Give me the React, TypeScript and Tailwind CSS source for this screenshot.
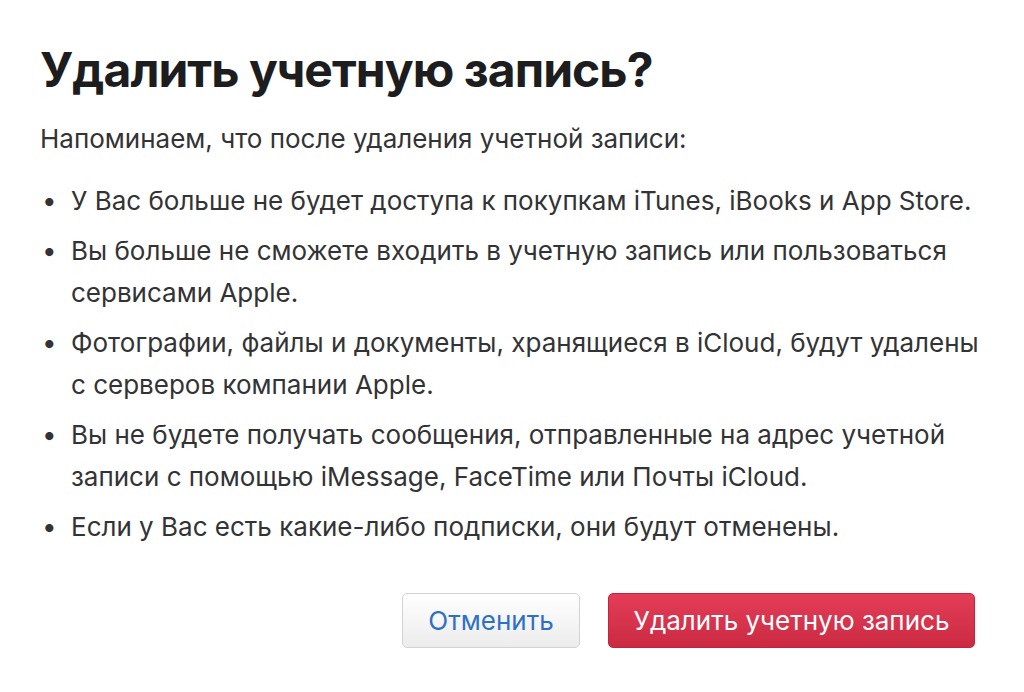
import React from 'react';

const ITEMS: string[][] = [
  ['У Вас больше не будет доступа к покупкам iTunes, iBooks и App Store.'],
  ['Вы больше не сможете входить в учетную запись или пользоваться', 'сервисами Apple.'],
  ['Фотографии, файлы и документы, хранящиеся в iCloud, будут удалены', 'с серверов компании Apple.'],
  ['Вы не будете получать сообщения, отправленные на адрес учетной', 'записи с помощью iMessage, FaceTime или Почты iCloud.'],
  ['Если у Вас есть какие-либо подписки, они будут отменены.'],
];

export default function App() {
  return (
    <div className="min-h-screen bg-white pl-10 pr-[49px] pt-[40px] font-['Inter','Noto_Sans',sans-serif] antialiased">
      <h1 className="text-[48px] font-bold leading-[60px] tracking-[-0.02em] text-[#1d1d1f]">
        Удалить учетную запись?
      </h1>

      <p className="mt-[18px] text-[26px] leading-[42px] text-[#333336]">
        Напоминаем, что после удаления учетной записи:
      </p>

      <ul className="mt-[20px] flex flex-col gap-2">
        {ITEMS.map((lines, i) => (
          <li key={i} className="flex text-[26px] leading-[42px] text-[#333336]">
            <span className="w-[31px] shrink-0 pl-[2px]">•</span>
            <span>
              {lines.map((l, j) => (
                <span key={j} className="block whitespace-nowrap">
                  {l}
                </span>
              ))}
            </span>
          </li>
        ))}
      </ul>

      <div className="mt-[45px] flex justify-end gap-7">
        <button className="h-[55px] w-[178px] rounded-[5px] border border-[#d3d3d3] bg-gradient-to-b from-white to-[#ececec] text-[26px] text-[#2f70c7]">
          Отменить
        </button>
        <button className="h-[55px] w-[367px] rounded-[5px] border border-[#c5233d] bg-gradient-to-b from-[#e43d58] to-[#cb2a43] text-[26px] text-white">
          Удалить учетную запись
        </button>
      </div>
    </div>
  );
}
